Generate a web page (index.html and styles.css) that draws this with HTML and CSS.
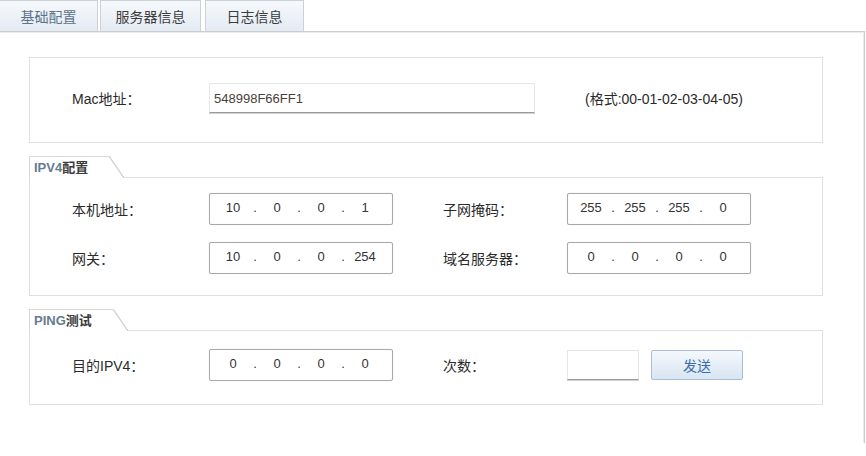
FILE: index.html
```html
<!DOCTYPE html>
<html lang="zh-CN">
<head>
    <meta charset="UTF-8">
    <title>基础配置</title>
    <link rel="stylesheet" href="styles.css">
</head>
<body>
    <div class="tabs">
        <div class="tab tab-basic active">基础配置</div>
        <div class="tab tab-server">服务器信息</div>
        <div class="tab tab-log">日志信息</div>
    </div>

    <div class="panel">
        <div class="box mac-box">
            <label class="field-label" for="mac">Mac地址：</label>
            <input type="text" id="mac" class="text-input mac-input" value="548998F66FF1">
            <span class="hint">(格式:00-01-02-03-04-05)</span>
        </div>

        <div class="group">
            <div class="group-tab tab-ipv4"><span class="group-en">IPV4</span>配置</div>
            <div class="box form-grid">
                <label class="field-label">本机地址：</label>
                <div class="ip-input">
                    <input class="octet" value="10"><span class="dot">.</span><input class="octet" value="0"><span class="dot">.</span><input class="octet" value="0"><span class="dot">.</span><input class="octet" value="1">
                </div>
                <label class="field-label label-right">子网掩码：</label>
                <div class="ip-input">
                    <input class="octet" value="255"><span class="dot">.</span><input class="octet" value="255"><span class="dot">.</span><input class="octet" value="255"><span class="dot">.</span><input class="octet" value="0">
                </div>

                <label class="field-label">网关：</label>
                <div class="ip-input">
                    <input class="octet" value="10"><span class="dot">.</span><input class="octet" value="0"><span class="dot">.</span><input class="octet" value="0"><span class="dot">.</span><input class="octet" value="254">
                </div>
                <label class="field-label label-right">域名服务器：</label>
                <div class="ip-input">
                    <input class="octet" value="0"><span class="dot">.</span><input class="octet" value="0"><span class="dot">.</span><input class="octet" value="0"><span class="dot">.</span><input class="octet" value="0">
                </div>
            </div>
        </div>

        <div class="group">
            <div class="group-tab tab-ping"><span class="group-en">PING</span>测试</div>
            <div class="box form-grid ping-grid">
                <label class="field-label">目的IPV4：</label>
                <div class="ip-input">
                    <input class="octet" value="0"><span class="dot">.</span><input class="octet" value="0"><span class="dot">.</span><input class="octet" value="0"><span class="dot">.</span><input class="octet" value="0">
                </div>
                <label class="field-label label-right" for="count">次数：</label>
                <div class="ping-actions">
                    <input type="text" id="count" class="text-input count-input">
                    <button class="send-btn">发送</button>
                </div>
            </div>
        </div>
    </div>
</body>
</html>
```

FILE: styles.css
```css
body {
    margin: 0;
    font-family: "Liberation Sans", "Noto Sans CJK SC", sans-serif;
    font-size: 14px;
    color: #333;
    background: #fff;
}

/* top tab strip */
.tabs {
    display: flex;
    height: 31px;
    margin-left: -1px;
}
.tab {
    box-sizing: border-box;
    height: 31px;
    display: flex;
    align-items: center;
    justify-content: center;
    border: 1px solid #cbd1d8;
    border-bottom: none;
    background: linear-gradient(#f7f9fc, #e2eaf3);
    color: #3c3c3c;
}
.tab.active {
    color: #5d7388;
}
.tab-basic {
    width: 99px;
    margin-right: 2px;
}
.tab-server {
    width: 101px;
    margin-right: 4px;
}
.tab-log {
    width: 99px;
}

.panel {
    box-sizing: border-box;
    width: 865px;
    height: 412px;
    padding: 25px 0 0 29px;
    border-top: 1px solid #cdcdcd;
    border-right: 1px solid #cdcdcd;
    box-shadow: inset -1px 1px 0 #ececec;
}

.box {
    box-sizing: border-box;
    width: 794px;
    border: 1px solid #e0e0e0;
    background: #fff;
}

.field-label {
    color: #2a2a2a;
}

/* mac row */
.mac-box {
    display: flex;
    align-items: center;
    height: 86px;
    padding: 0 0 4px 42px;
}
.mac-box .field-label {
    width: 137px;
}
.hint {
    margin-left: 50px;
    color: #2a2a2a;
}

.text-input {
    box-sizing: border-box;
    height: 30px;
    padding: 0 4px;
    border: 1px solid #e6e6e6;
    border-bottom: 1px solid #9a9a9a;
    box-shadow: 0 1px 0 #d2d2d2;
    font-family: "Liberation Sans", sans-serif;
    font-size: 13px;
    color: #4a4038;
    outline: none;
}
.mac-input {
    width: 326px;
}
.count-input {
    width: 72px;
}

/* grouped sections with a slanted title tab */
.group {
    margin-top: 13px;
}
.group-tab {
    position: relative;
    z-index: 1;
    box-sizing: border-box;
    height: 22px;
    margin-bottom: -1px;
    padding-left: 4px;
    border-top: 1px solid #dadada;
    border-left: 1px solid #dadada;
    background: #fff;
    font-size: 13px;
    font-weight: bold;
    line-height: 21px;
    color: #3a3a3a;
}
.group-tab::after {
    content: "";
    position: absolute;
    left: 100%;
    top: -1px;
    width: 15px;
    height: 22px;
    background: linear-gradient(to top right, #fff calc(50% - 1px), #d6d6d6 calc(50% - 0.5px), #d6d6d6 calc(50% + 0.5px), transparent calc(50% + 1px));
}
.tab-ipv4 {
    width: 80px;
}
.tab-ping {
    width: 84px;
}
.group-en {
    color: #677b91;
}

.form-grid {
    display: grid;
    grid-template-columns: 137px 184px 174px 183px;
    align-items: center;
    row-gap: 17px;
    padding: 15px 0 21px 42px;
}
.ping-grid {
    padding: 18px 0 23px 42px;
}
.label-right {
    padding-left: 50px;
}

/* dotted ip address field */
.ip-input {
    box-sizing: border-box;
    width: 184px;
    height: 32px;
    display: flex;
    align-items: center;
    padding: 0 0 3px 4px;
    border: 1px solid #a9a9a9;
    border-radius: 2px;
    box-shadow: 0 0 1px #d0d0d0, inset 0 0 1px #e4e4e4;
    font-family: "Liberation Sans", sans-serif;
    font-size: 13px;
}
.octet {
    width: 38px;
    padding: 0;
    border: none;
    background: transparent;
    text-align: center;
    font-family: "Liberation Sans", sans-serif;
    font-size: 13px;
    color: #333;
    outline: none;
}
.dot {
    width: 6px;
    text-align: center;
    color: #333;
}

.ping-actions {
    display: flex;
    align-items: center;
}
.send-btn {
    width: 92px;
    height: 30px;
    margin-left: 12px;
    border: 1px solid #adbed3;
    border-radius: 2px;
    background: linear-gradient(#f4f8fc, #d8e5f3);
    color: #3b6ea8;
    font-family: "Liberation Sans", "Noto Sans CJK SC", sans-serif;
    font-size: 14px;
    cursor: pointer;
}
```
